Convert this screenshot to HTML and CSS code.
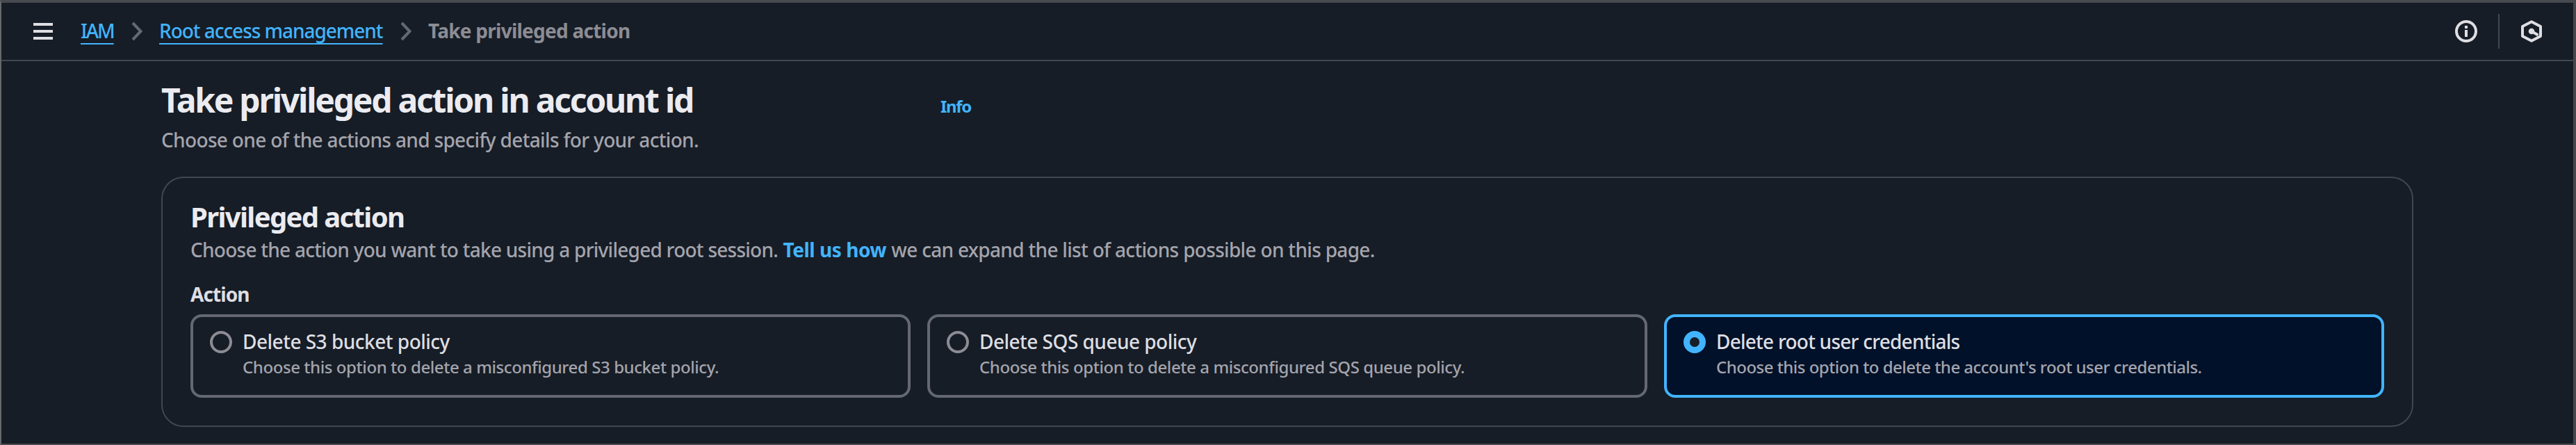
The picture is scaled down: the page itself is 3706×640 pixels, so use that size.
FILE: index.html
```html
<!DOCTYPE html>
<html lang="en">
<head>
<meta charset="utf-8">
<title>Take privileged action | IAM</title>
<link rel="stylesheet" href="styles.css">
</head>
<body>
<div class="window">
  <header class="topbar">
    <svg class="menu-icon" width="28" height="24" viewBox="0 0 28 24"><path d="M0 2h28M0 12h28M0 22h28"/></svg>
    <nav class="crumbs">
      <a class="crumb-link crumb-iam">IAM</a>
      <svg class="chevron" width="16" height="28" viewBox="0 0 16 28"><path d="M2 2l11.4 12L2 26"/></svg>
      <a class="crumb-link crumb-root">Root access management</a>
      <svg class="chevron" width="16" height="28" viewBox="0 0 16 28"><path d="M2 2l11.4 12L2 26"/></svg>
      <span class="crumb-current">Take privileged action</span>
    </nav>
    <div class="tools">
      <svg class="tool-icon" width="32" height="32" viewBox="0 0 32 32"><circle cx="16" cy="16" r="14"/><path d="M16 8v4M16 14v10"/></svg>
      <span class="divider"></span>
      <svg class="tool-icon" width="32" height="32" viewBox="0 0 32 32"><path d="M16 2.2l13 6.8v14l-13 6.8L3 23V9z" stroke-linejoin="round"/><path d="M16 16l9.5 5.5"/><circle class="dot" cx="16" cy="16" r="4.3"/></svg>
    </div>
  </header>
  <main class="content">
    <div class="title-row">
      <h1 class="title">Take privileged action in account id</h1>
      <a class="info">Info</a>
    </div>
    <p class="subtitle">Choose one of the actions and specify details for your action.</p>
    <section class="panel">
      <h2 class="panel-title">Privileged action</h2>
      <p class="panel-desc"><span class="lead">Choose the action you want to take using a privileged root session.</span> <a class="feedback">Tell us how</a> <span class="tail">we can expand the list of actions possible on this page.</span></p>
      <div class="field-label">Action</div>
      <div class="tiles">
        <div class="tile">
          <span class="radio"></span>
          <div class="tile-text"><div class="tile-label label-s3">Delete S3 bucket policy</div><div class="tile-desc desc-s3">Choose this option to delete a misconfigured S3 bucket policy.</div></div>
        </div>
        <div class="tile">
          <span class="radio"></span>
          <div class="tile-text"><div class="tile-label label-sqs">Delete SQS queue policy</div><div class="tile-desc desc-sqs">Choose this option to delete a misconfigured SQS queue policy.</div></div>
        </div>
        <div class="tile selected">
          <span class="radio"></span>
          <div class="tile-text"><div class="tile-label label-root">Delete root user credentials</div><div class="tile-desc desc-root">Choose this option to delete the account's root user credentials.</div></div>
        </div>
      </div>
    </section>
  </main>
</div>
</body>
</html>
```
FILE: styles.css
```css
* { box-sizing: border-box; }

body {
  margin: 0;
  background: #161d26;
  color: #dedee3;
  font: 500 28px/40px "Noto Sans", sans-serif;
}

h1, h2, p { margin: 0; }
svg { display: block; fill: none; }

.window {
  width: 3706px;
  height: 640px;
  overflow: hidden;
  border-top: 4px solid #474a4f;
  border-right: 4px solid #47484b;
  border-bottom: 2px solid #4a4b50;
  border-left: 2px solid #66686c;
}

.topbar {
  display: flex;
  align-items: center;
  height: 84px;
  padding: 0 44px 0 46px;
  border-bottom: 2px solid #424650;
}

.menu-icon { stroke: #dedee3; stroke-width: 4; }

.crumbs {
  display: flex;
  align-items: center;
  flex: 1;
  margin-left: 40px;
  white-space: nowrap;
}

.crumb-link {
  color: #42b4ff;
  text-decoration: underline 2px;
  text-underline-offset: 7px;
  text-decoration-skip-ink: none;
  margin-top: -2px;
}

.crumb-iam { width: 49px; letter-spacing: -2.1px; }
.crumb-root { width: 323px; letter-spacing: -1.04px; }

.chevron { stroke: #656871; stroke-width: 4; margin: 0 24px; }

.crumb-current {
  color: #8c8c94;
  font-weight: 700;
  letter-spacing: -0.747px;
  margin-top: -2px;
}

.tools { display: flex; align-items: center; }
.tool-icon { stroke: #dedee3; stroke-width: 4; }
.tool-icon .dot { fill: #dedee3; stroke: none; }
.divider { width: 2px; height: 50px; margin: 0 30px; background: #424650; }

.content { padding: 26px 230px 0; }

.title-row { display: flex; align-items: baseline; height: 59px; }

.title {
  width: 1121px;
  font-size: 48px;
  font-weight: 700;
  line-height: 60px;
  letter-spacing: -2.227px;
  color: #ebebf0;
}

.info { color: #42b4ff; font-size: 24px; font-weight: 700; letter-spacing: -1.3px; }

.subtitle { margin-top: 8px; color: #a4a4ad; letter-spacing: -0.663px; }

.panel {
  height: 360px;
  margin-top: 33px;
  padding: 31px 40px 0;
  border: 2px solid #424650;
  border-radius: 32px;
}

.panel-title {
  font-size: 40px;
  font-weight: 700;
  line-height: 50px;
  letter-spacing: -1.627px;
  color: #ebebf0;
}

.panel-desc { margin-top: 2px; color: #a4a4ad; white-space: nowrap; }
.lead { letter-spacing: -0.746px; }
.feedback { color: #42b4ff; font-weight: 700; letter-spacing: -0.456px; }
.tail { letter-spacing: -0.685px; }

.field-label { margin-top: 24px; font-weight: 700; letter-spacing: -0.93px; }

.tiles {
  display: grid;
  grid-template-columns: repeat(3, 1fr);
  gap: 24px;
  margin-top: 9px;
}

.tile {
  display: flex;
  gap: 15px;
  height: 120px;
  padding: 15px 24px;
  border: 4px solid #656871;
  border-radius: 16px;
}

.radio {
  width: 32px;
  height: 32px;
  margin-top: 5px;
  border: 4px solid #8c8c94;
  border-radius: 50%;
}

.tile.selected { background: #001129; border-color: #42b4ff; }
.selected .radio { border: 9px solid #42b4ff; background: #161d26; }

.tile-desc { color: #a4a4ad; font-size: 24px; line-height: 34px; }
.label-s3 { letter-spacing: -0.503px; }
.label-sqs { letter-spacing: -0.523px; }
.label-root { letter-spacing: -0.762px; }
.desc-s3 { letter-spacing: -0.421px; }
.desc-sqs { letter-spacing: -0.416px; }
.desc-root { letter-spacing: -0.521px; }
```
